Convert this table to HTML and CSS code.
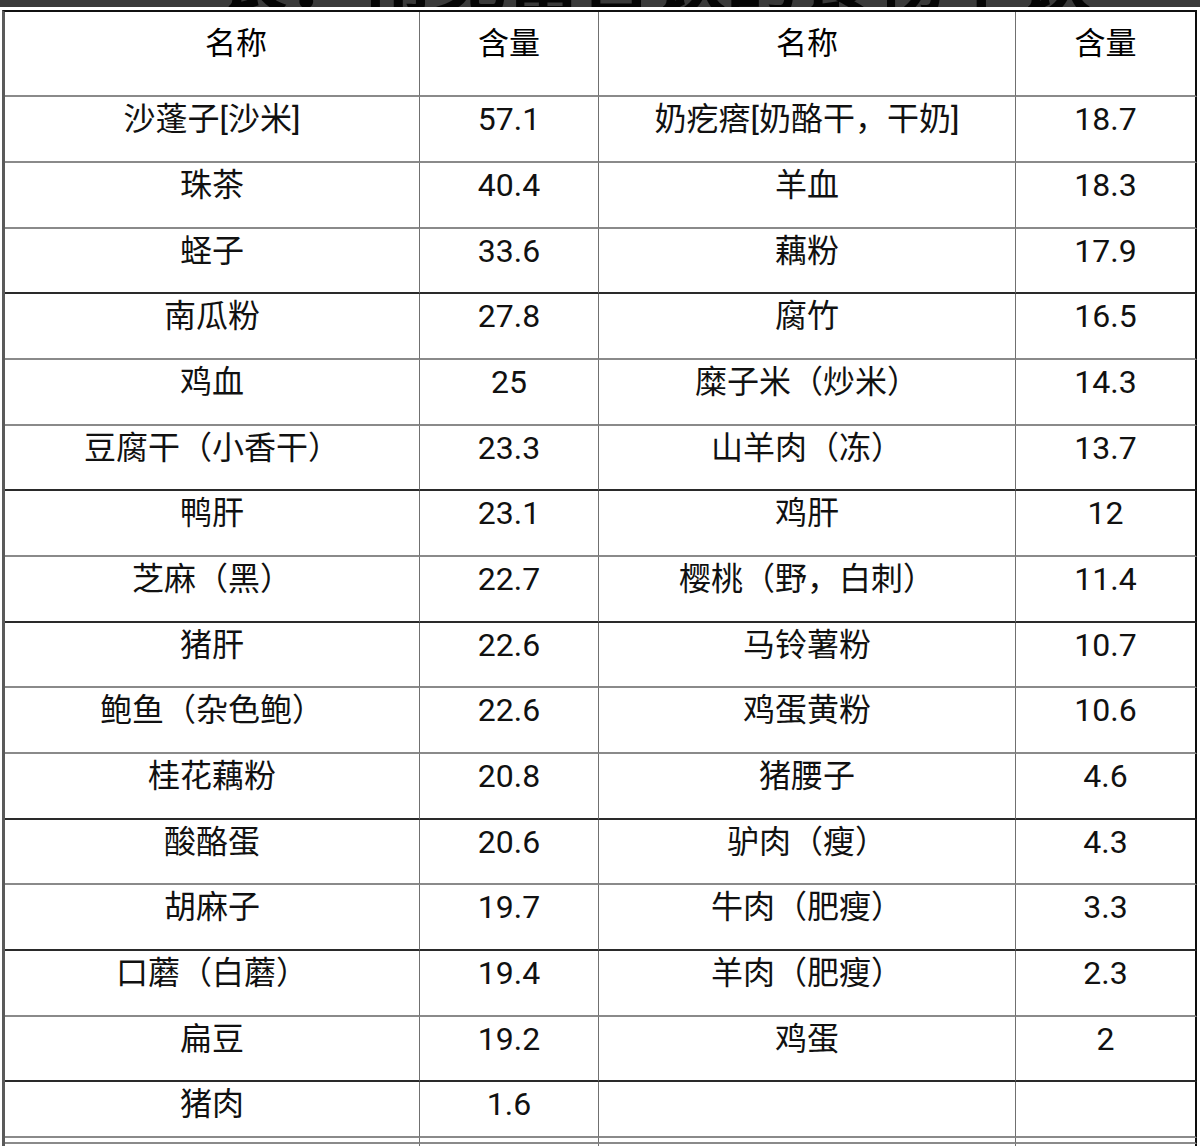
FILE: index.html
```html
<!DOCTYPE html>
<html lang="zh">
<head>
<meta charset="utf-8">
<title>常见富含铁的食物</title>
<link rel="stylesheet" href="styles.css">
</head>
<body>
<div class="title"><span class="title-text">表：常见富含铁的食物中铁</span></div>
<div class="gap"></div>
<table class="iron">
  <colgroup>
    <col class="c-name1"><col class="c-val"><col class="c-name"><col class="c-val2">
  </colgroup>
  <thead>
    <tr class="head">
      <th class="first">名称</th><th>含量</th><th>名称</th><th class="last">含量</th>
    </tr>
  </thead>
  <tbody>
    <tr class="r66"><td>沙蓬子[沙米]</td><td>57.1</td><td>奶疙瘩[奶酪干，干奶]</td><td class="last">18.7</td></tr>
    <tr class="r66"><td>珠茶</td><td>40.4</td><td>羊血</td><td class="last">18.3</td></tr>
    <tr class="r65 dark"><td>蛏子</td><td>33.6</td><td>藕粉</td><td class="last">17.9</td></tr>
    <tr class="r66"><td>南瓜粉</td><td>27.8</td><td>腐竹</td><td class="last">16.5</td></tr>
    <tr class="r66"><td>鸡血</td><td>25</td><td>糜子米（炒米）</td><td class="last">14.3</td></tr>
    <tr class="r65 dark"><td>豆腐干（小香干）</td><td>23.3</td><td>山羊肉（冻）</td><td class="last">13.7</td></tr>
    <tr class="r66"><td>鸭肝</td><td>23.1</td><td>鸡肝</td><td class="last">12</td></tr>
    <tr class="r66 dark"><td>芝麻（黑）</td><td>22.7</td><td>樱桃（野，白刺）</td><td class="last">11.4</td></tr>
    <tr class="r65"><td>猪肝</td><td>22.6</td><td>马铃薯粉</td><td class="last">10.7</td></tr>
    <tr class="r66"><td>鲍鱼（杂色鲍）</td><td>22.6</td><td>鸡蛋黄粉</td><td class="last">10.6</td></tr>
    <tr class="r66 dark"><td>桂花藕粉</td><td>20.8</td><td>猪腰子</td><td class="last">4.6</td></tr>
    <tr class="r65"><td>酸酪蛋</td><td>20.6</td><td>驴肉（瘦）</td><td class="last">4.3</td></tr>
    <tr class="r66 dark"><td>胡麻子</td><td>19.7</td><td>牛肉（肥瘦）</td><td class="last">3.3</td></tr>
    <tr class="r66"><td>口蘑（白蘑）</td><td>19.4</td><td>羊肉（肥瘦）</td><td class="last">2.3</td></tr>
    <tr class="r65 dark"><td>扁豆</td><td>19.2</td><td>鸡蛋</td><td class="last">2</td></tr>
    <tr class="r56"><td>猪肉</td><td>1.6</td><td></td><td class="last"></td></tr>
    <tr class="r6"><td></td><td></td><td></td><td class="last"></td></tr>
    <tr class="r20"><td></td><td></td><td></td><td class="last"></td></tr>
  </tbody>
</table>
</body>
</html>
```
FILE: styles.css
```css
html, body {
  margin: 0;
  padding: 0;
  background: #ffffff;
}

body {
  overflow: hidden;
  height: 1146px;
}

.title {
  height: 7px;
  background: #3a3a3a;
  overflow: hidden;
  padding-left: 215px;
}

.title-text {
  display: block;
  margin-top: -28px;
  font-family: "Noto Sans CJK SC", sans-serif;
  font-weight: 700;
  font-size: 73px;
  line-height: 7px;
  color: #050505;
  white-space: nowrap;
}

.gap {
  height: 3px;
}

.iron {
  margin-left: 2px;
  width: 1195px;
  border-collapse: separate;
  border-spacing: 0;
  table-layout: fixed;
  border-top: 2px solid #111;
  border-left: 3px solid #5a5a5a;
}

.c-name1 { width: 415px; }
.c-name { width: 417px; }
.c-val { width: 179px; }
.c-val2 { width: 181px; }

.iron th,
.iron td {
  box-sizing: border-box;
  padding: 0;
  text-align: center;
  vertical-align: top;
  border-right: 1px solid #707070;
  border-bottom: 2px solid #8a8a8a;
  color: #111;
  overflow: hidden;
  white-space: nowrap;
}

.iron th.last,
.iron td.last {
  border-right: 2px solid #0d0d0d;
}

.head th {
  height: 85px;
  padding-top: 7px;
  font-family: "Noto Sans CJK SC", serif;
  font-weight: 400;
  font-size: 31px;
  line-height: 44px;
  color: #000;
}

.head th.first {
  padding-left: 48px;
}

.iron td {
  font-family: Roboto, "Noto Sans CJK SC", sans-serif;
  font-size: 32px;
  line-height: 44px;
}

.r66 td { height: 66px; }
.r65 td { height: 65px; }
.r56 td { height: 56px; }
.r6 td { height: 6px; }
.r20 td { height: 30px; }

.dark td {
  border-bottom-color: #2a2a2a;
}
```
